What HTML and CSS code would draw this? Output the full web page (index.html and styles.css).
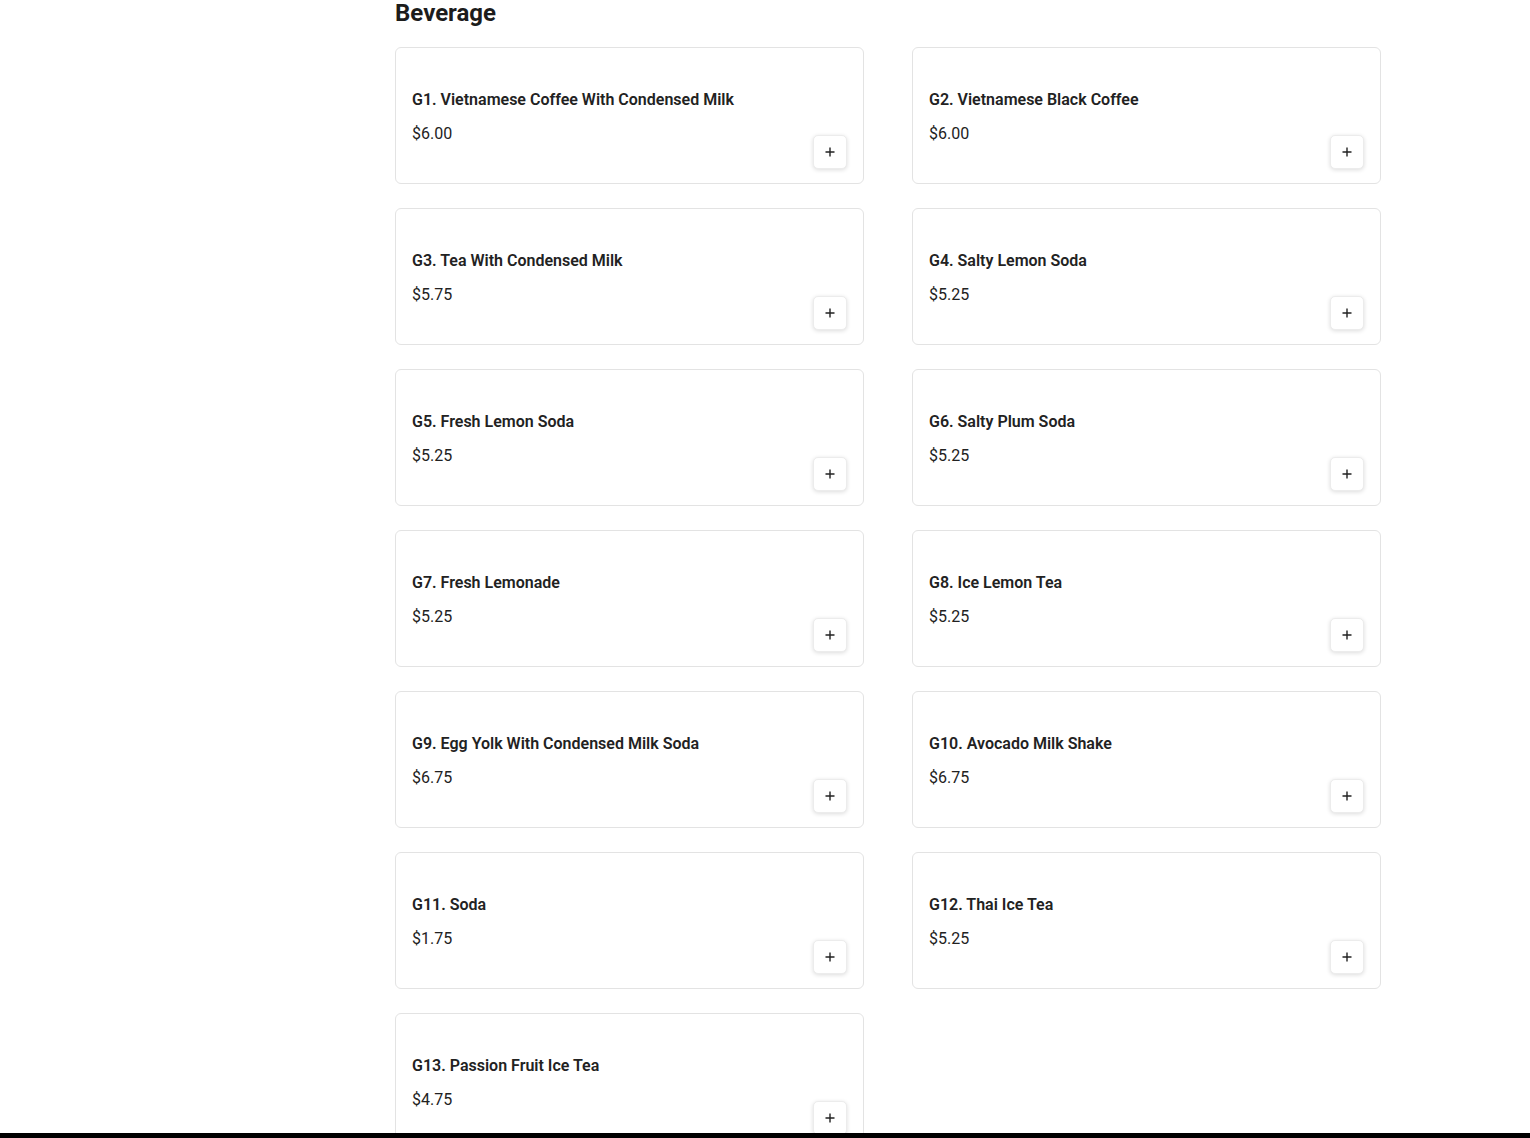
FILE: index.html
```html
<!DOCTYPE html>
<html lang="en">
<head>
<meta charset="utf-8">
<title>Beverage</title>
<link rel="stylesheet" href="styles.css">
</head>
<body>
<div class="page">
  <aside class="side"></aside>
  <main class="main">
    <h2 class="cat-title">Beverage</h2>
    <div class="grid">
      <div class="card"><div class="info"><div class="name">G1. Vietnamese Coffee With Condensed Milk</div><div class="price">$6.00</div></div><button class="add"><svg viewBox="0 0 10 10" width="10" height="10"><path d="M5 0.5v9M0.5 5h9" stroke="#222" stroke-width="1.4" fill="none"/></svg></button></div>
      <div class="card"><div class="info"><div class="name">G2. Vietnamese Black Coffee</div><div class="price">$6.00</div></div><button class="add"><svg viewBox="0 0 10 10" width="10" height="10"><path d="M5 0.5v9M0.5 5h9" stroke="#222" stroke-width="1.4" fill="none"/></svg></button></div>
      <div class="card"><div class="info"><div class="name">G3. Tea With Condensed Milk</div><div class="price">$5.75</div></div><button class="add"><svg viewBox="0 0 10 10" width="10" height="10"><path d="M5 0.5v9M0.5 5h9" stroke="#222" stroke-width="1.4" fill="none"/></svg></button></div>
      <div class="card"><div class="info"><div class="name">G4. Salty Lemon Soda</div><div class="price">$5.25</div></div><button class="add"><svg viewBox="0 0 10 10" width="10" height="10"><path d="M5 0.5v9M0.5 5h9" stroke="#222" stroke-width="1.4" fill="none"/></svg></button></div>
      <div class="card"><div class="info"><div class="name">G5. Fresh Lemon Soda</div><div class="price">$5.25</div></div><button class="add"><svg viewBox="0 0 10 10" width="10" height="10"><path d="M5 0.5v9M0.5 5h9" stroke="#222" stroke-width="1.4" fill="none"/></svg></button></div>
      <div class="card"><div class="info"><div class="name">G6. Salty Plum Soda</div><div class="price">$5.25</div></div><button class="add"><svg viewBox="0 0 10 10" width="10" height="10"><path d="M5 0.5v9M0.5 5h9" stroke="#222" stroke-width="1.4" fill="none"/></svg></button></div>
      <div class="card"><div class="info"><div class="name">G7. Fresh Lemonade</div><div class="price">$5.25</div></div><button class="add"><svg viewBox="0 0 10 10" width="10" height="10"><path d="M5 0.5v9M0.5 5h9" stroke="#222" stroke-width="1.4" fill="none"/></svg></button></div>
      <div class="card"><div class="info"><div class="name">G8. Ice Lemon Tea</div><div class="price">$5.25</div></div><button class="add"><svg viewBox="0 0 10 10" width="10" height="10"><path d="M5 0.5v9M0.5 5h9" stroke="#222" stroke-width="1.4" fill="none"/></svg></button></div>
      <div class="card"><div class="info"><div class="name">G9. Egg Yolk With Condensed Milk Soda</div><div class="price">$6.75</div></div><button class="add"><svg viewBox="0 0 10 10" width="10" height="10"><path d="M5 0.5v9M0.5 5h9" stroke="#222" stroke-width="1.4" fill="none"/></svg></button></div>
      <div class="card"><div class="info"><div class="name">G10. Avocado Milk Shake</div><div class="price">$6.75</div></div><button class="add"><svg viewBox="0 0 10 10" width="10" height="10"><path d="M5 0.5v9M0.5 5h9" stroke="#222" stroke-width="1.4" fill="none"/></svg></button></div>
      <div class="card"><div class="info"><div class="name">G11. Soda</div><div class="price">$1.75</div></div><button class="add"><svg viewBox="0 0 10 10" width="10" height="10"><path d="M5 0.5v9M0.5 5h9" stroke="#222" stroke-width="1.4" fill="none"/></svg></button></div>
      <div class="card"><div class="info"><div class="name">G12. Thai Ice Tea</div><div class="price">$5.25</div></div><button class="add"><svg viewBox="0 0 10 10" width="10" height="10"><path d="M5 0.5v9M0.5 5h9" stroke="#222" stroke-width="1.4" fill="none"/></svg></button></div>
      <div class="card"><div class="info"><div class="name">G13. Passion Fruit Ice Tea</div><div class="price">$4.75</div></div><button class="add"><svg viewBox="0 0 10 10" width="10" height="10"><path d="M5 0.5v9M0.5 5h9" stroke="#222" stroke-width="1.4" fill="none"/></svg></button></div>
    </div>
  </main>
</div>
<div class="bottom-bar"></div>
</body>
</html>
```
FILE: styles.css
```css
* { box-sizing: border-box; }
html, body { margin: 0; padding: 0; background: #fff; }
body {
  font-family: Roboto, "Liberation Sans", Arial, sans-serif;
  color: #1f1f1f;
  overflow: hidden;
  height: 1138px;
}
.page {
  display: flex;
  gap: 48px;
}
.side {
  width: 347px;
  flex: 0 0 347px;
}
.main {
  width: 986px;
  margin-top: -1px;
}
.cat-title {
  margin: 0 0 20px 0;
  font-size: 24px;
  line-height: 28px;
  font-weight: 700;
  color: #1c1c1c;
}
.grid {
  display: grid;
  grid-template-columns: 469px 469px;
  column-gap: 48px;
  row-gap: 24px;
}
.card {
  height: 137px;
  border: 1px solid #e3e3e3;
  border-radius: 6px;
  padding: 16px 16px 14px 16px;
  display: flex;
  justify-content: space-between;
  background: #fff;
}
.info {
  padding-top: 24px;
}
.name {
  font-size: 16px;
  line-height: 24px;
  font-weight: 600;
  color: #222;
}
.price {
  margin-top: 10px;
  font-size: 16px;
  line-height: 24px;
  font-weight: 400;
  color: #222;
}
.add {
  align-self: flex-end;
  width: 34px;
  height: 34px;
  padding: 0;
  border: 1px solid #ececec;
  border-radius: 5px;
  background: #fff;
  box-shadow: 0 1px 4px rgba(0,0,0,0.14);
  display: flex;
  align-items: center;
  justify-content: center;
  cursor: pointer;
}
.bottom-bar {
  position: fixed;
  left: 0;
  right: 0;
  bottom: 0;
  height: 5px;
  background: #000;
}
```
